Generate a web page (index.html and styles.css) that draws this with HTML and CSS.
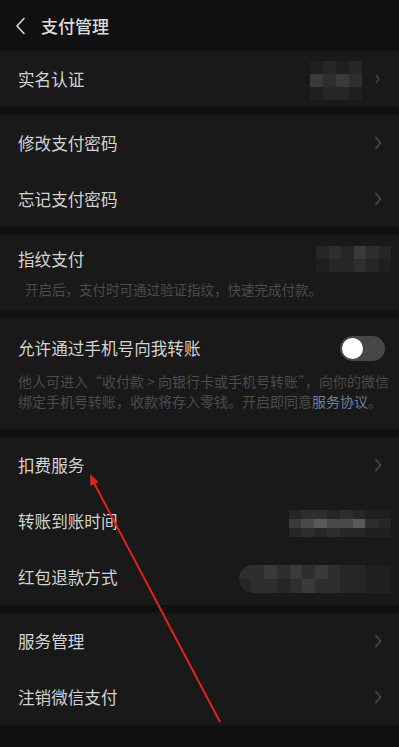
FILE: index.html
```html
<!DOCTYPE html>
<html lang="zh-CN">
<head>
<meta charset="utf-8">
<title>支付管理</title>
<link rel="stylesheet" href="styles.css">
</head>
<body>
<div class="page">
  <header class="header">
    <svg class="back" width="12" height="18" viewBox="0 0 12 18"><polyline points="9,1.5 2,9 9,16.5" fill="none" stroke="#d8d8d8" stroke-width="1.6" stroke-linecap="round" stroke-linejoin="round"/></svg>
    <span class="title">支付管理</span>
  </header>

  <section class="group">
    <div class="row">
      <span class="label">实名认证</span>
      <div class="right">
        <div class="mosaic mos-a">
          <div class="mrow"><i class="s1"></i><i class="s2"></i><i class="s1"></i><i class="s2"></i></div>
          <div class="mrow"><i class="s4"></i><i class="s3"></i><i class="s4"></i><i class="s3"></i></div>
          <div class="mrow"><i class="s1"></i><i class="s2"></i><i class="s2"></i><i class="s1"></i></div>
        </div>
        <svg class="chev faint" width="8" height="14" viewBox="0 0 8 14"><polyline points="2,3 5,7 2,11" fill="none" stroke="#444" stroke-width="1.5"/></svg>
      </div>
    </div>
  </section>

  <section class="group">
    <div class="row">
      <span class="label">修改支付密码</span>
      <svg class="chev" width="8" height="14" viewBox="0 0 8 14"><polyline points="1.5,1 6.5,7 1.5,13" fill="none" stroke="#4d4d4d" stroke-width="1.5"/></svg>
    </div>
    <div class="row">
      <span class="label">忘记支付密码</span>
      <svg class="chev" width="8" height="14" viewBox="0 0 8 14"><polyline points="1.5,1 6.5,7 1.5,13" fill="none" stroke="#4d4d4d" stroke-width="1.5"/></svg>
    </div>
  </section>

  <section class="group block fp">
    <div class="block-head">
      <span class="label">指纹支付</span>
      <div class="mosaic mos-b">
        <div class="mrow"><i class="s2"></i><i class="s3"></i><i class="s2"></i><i class="s4"></i><i class="s3"></i><i class="s2"></i></div>
        <div class="mrow"><i class="s1"></i><i class="s2"></i><i class="s2"></i><i class="s3"></i><i class="s2"></i><i class="s1"></i></div>
      </div>
    </div>
    <p class="desc indent">开启后，支付时可通过验证指纹，快速完成付款。</p>
  </section>

  <section class="group block tg">
    <div class="block-head">
      <span class="label">允许通过手机号向我转账</span>
      <div class="toggle"><span class="knob"></span></div>
    </div>
    <p class="desc">他人可进入“收付款 &gt; 向银行卡或手机号转账”，向你的微信<br>绑定手机号转账，收款将存入零钱。开启即同意<span class="link">服务协议</span>。</p>
  </section>

  <section class="group">
    <div class="row">
      <span class="label">扣费服务</span>
      <svg class="chev" width="8" height="14" viewBox="0 0 8 14"><polyline points="1.5,1 6.5,7 1.5,13" fill="none" stroke="#4d4d4d" stroke-width="1.5"/></svg>
    </div>
    <div class="row">
      <span class="label">转账到账时间</span>
      <div class="mosaic mos-c">
        <div class="mrow"><i class="s2"></i><i class="s3"></i><i class="s3"></i><i class="s2"></i><i class="s3"></i><i class="s2"></i><i class="s1"></i><i class="s1"></i></div>
        <div class="mrow"><i class="s4"></i><i class="s5"></i><i class="s6"></i><i class="s5"></i><i class="s5"></i><i class="s6"></i><i class="s3"></i><i class="s2"></i></div>
        <div class="mrow"><i class="s2"></i><i class="s3"></i><i class="s2"></i><i class="s3"></i><i class="s2"></i><i class="s2"></i><i class="s1"></i><i class="s1"></i></div>
      </div>
    </div>
    <div class="row">
      <span class="label">红包退款方式</span>
      <div class="mosaic mos-d">
        <div class="mrow"><i class="s3"></i><i class="s3"></i><i class="s4"></i><i class="s3"></i><i class="s4"></i><i class="s3"></i><i class="s4"></i><i class="s3"></i><i class="s2"></i><i class="s2"></i><i class="s1"></i><i class="s1"></i></div>
        <div class="mrow"><i class="s2"></i><i class="s3"></i><i class="s3"></i><i class="s2"></i><i class="s3"></i><i class="s4"></i><i class="s3"></i><i class="s3"></i><i class="s2"></i><i class="s2"></i><i class="s1"></i><i class="s1"></i></div>
      </div>
    </div>
  </section>

  <section class="group">
    <div class="row">
      <span class="label">服务管理</span>
      <svg class="chev" width="8" height="14" viewBox="0 0 8 14"><polyline points="1.5,1 6.5,7 1.5,13" fill="none" stroke="#4d4d4d" stroke-width="1.5"/></svg>
    </div>
    <div class="row">
      <span class="label">注销微信支付</span>
      <svg class="chev" width="8" height="14" viewBox="0 0 8 14"><polyline points="1.5,1 6.5,7 1.5,13" fill="none" stroke="#4d4d4d" stroke-width="1.5"/></svg>
    </div>
  </section>

  <svg class="annot" width="399" height="747" viewBox="0 0 399 747">
    <line x1="94" y1="483" x2="220" y2="722" stroke="#e3221c" stroke-width="2"/>
    <polygon points="90,474 98.5,482 90.5,486" fill="#e3221c"/>
  </svg>
</div>
</body>
</html>
```

FILE: styles.css
```css
* { box-sizing: border-box; }
html, body { margin: 0; padding: 0; }
body {
  background: #111111;
  font-family: "Noto Sans CJK SC", "Noto Sans", sans-serif;
  color: #d3d3d3;
}
.page {
  position: relative;
  width: 399px;
  height: 747px;
  overflow: hidden;
  background: #111111;
}
.header {
  height: 51px;
  display: flex;
  align-items: center;
  padding-left: 15px;
  gap: 14px;
}
.back { display: block; }
.title {
  font-size: 17px;
  font-weight: 500;
  color: #dcdcdc;
  line-height: 22px;
}
.group {
  background: #191919;
  margin-bottom: 8px;
}
.row {
  height: 56px;
  display: flex;
  align-items: center;
  justify-content: space-between;
  padding: 0 17px 0 18px;
}
.label {
  font-size: 16.6px;
  line-height: 22px;
  color: #d3d3d3;
  white-space: nowrap;
}
.chev { display: block; }
.right {
  display: flex;
  align-items: center;
  gap: 12px;
}
.mosaic {
  display: flex;
  flex-direction: column;
}
.mrow { display: flex; }
.mrow i { display: block; width: 13px; height: 13px; }
.s1 { background: #1f1f1f; }
.s2 { background: #262626; }
.s3 { background: #2e2e2e; }
.s4 { background: #3a3a3a; }
.s5 { background: #4a4a4a; }
.s6 { background: #595959; }
.mos-a { margin-top: 2px; }
.mos-a .mrow i { height: 13px; }
.mos-b { margin-right: -9px; }
.mos-b .mrow i { width: 12.5px; height: 13px; }
.mos-c { margin-right: -9px; margin-top: 4px; }
.mos-c .mrow i { width: 12.8px; height: 9px; }
.mos-d { margin-right: -9px; border-radius: 14px 0 0 14px; overflow: hidden; margin-top: 4px; }
.mos-d .mrow i { width: 12.7px; height: 14px; }

.block { padding: 13px 17px 11px 18px; }
.block-head {
  display: flex;
  align-items: center;
  justify-content: space-between;
  height: 22px;
}
.desc {
  margin: 9px 0 0;
  font-size: 14px;
  line-height: 20px;
  color: #4c4c4c;
  white-space: nowrap;
}
.indent { padding-left: 7px; font-size: 13.5px; }
.tg { padding: 18px 14px 18px 18px; margin-top: 9px; }
.tg .desc { margin-top: 12px; }
.link { color: #6b7f9c; }
.toggle {
  width: 45px;
  height: 25px;
  border-radius: 13px;
  background: #474747;
  padding: 2px;
  display: flex;
  align-items: center;
}
.knob {
  width: 21px;
  height: 21px;
  border-radius: 50%;
  background: #ffffff;
  display: block;
}
.annot {
  position: absolute;
  left: 0;
  top: 0;
  pointer-events: none;
}
```
